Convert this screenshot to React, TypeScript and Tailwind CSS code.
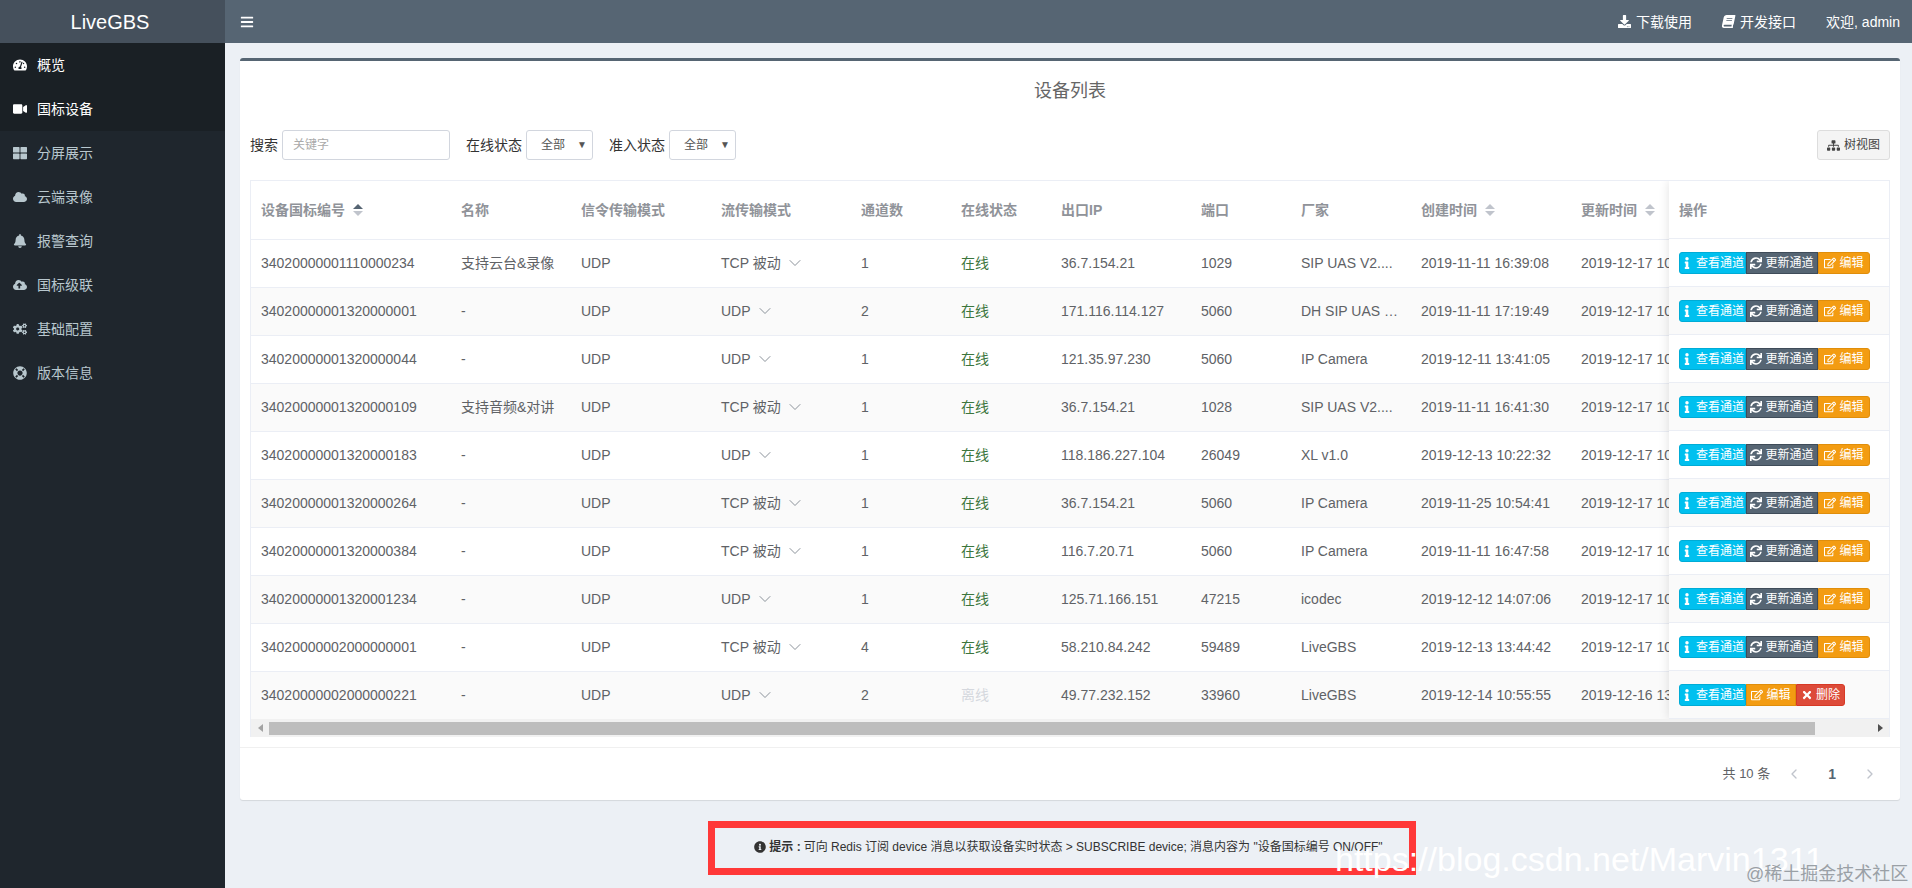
import {
  FaBars,
  FaBell,
  FaBook,
  FaCloud,
  FaCloudUploadAlt,
  FaCogs,
  FaDownload,
  FaInfo,
  FaInfoCircle,
  FaLifeRing,
  FaRegEdit,
  FaSitemap,
  FaSync,
  FaTachometerAlt,
  FaThLarge,
  FaTimes,
  FaVideo,
} from 'react-icons/fa';
import { ChevronDown, ChevronLeft, ChevronRight } from 'lucide-react';

const menu = [
  { icon: FaTachometerAlt, label: '概览', active: true },
  { icon: FaVideo, label: '国标设备', active: true },
  { icon: FaThLarge, label: '分屏展示' },
  { icon: FaCloud, label: '云端录像' },
  { icon: FaBell, label: '报警查询' },
  { icon: FaCloudUploadAlt, label: '国标级联' },
  { icon: FaCogs, label: '基础配置' },
  { icon: FaLifeRing, label: '版本信息' },
];

const devices = [
  ['34020000001110000234', '支持云台&录像', 'TCP 被动', '1', '36.7.154.21', '1029', 'SIP UAS V2....', '2019-11-11 16:39:08', '2019-12-17 10:22:31'],
  ['34020000001320000001', '-', 'UDP', '2', '171.116.114.127', '5060', 'DH SIP UAS V2.1', '2019-11-11 17:19:49', '2019-12-17 10:22:31'],
  ['34020000001320000044', '-', 'UDP', '1', '121.35.97.230', '5060', 'IP Camera', '2019-12-11 13:41:05', '2019-12-17 10:22:31'],
  ['34020000001320000109', '支持音频&对讲', 'TCP 被动', '1', '36.7.154.21', '1028', 'SIP UAS V2....', '2019-11-11 16:41:30', '2019-12-17 10:22:31'],
  ['34020000001320000183', '-', 'UDP', '1', '118.186.227.104', '26049', 'XL v1.0', '2019-12-13 10:22:32', '2019-12-17 10:22:31'],
  ['34020000001320000264', '-', 'TCP 被动', '1', '36.7.154.21', '5060', 'IP Camera', '2019-11-25 10:54:41', '2019-12-17 10:22:31'],
  ['34020000001320000384', '-', 'TCP 被动', '1', '116.7.20.71', '5060', 'IP Camera', '2019-11-11 16:47:58', '2019-12-17 10:22:31'],
  ['34020000001320001234', '-', 'UDP', '1', '125.71.166.151', '47215', 'icodec', '2019-12-12 14:07:06', '2019-12-17 10:22:31'],
  ['34020000002000000001', '-', 'TCP 被动', '4', '58.210.84.242', '59489', 'LiveGBS', '2019-12-13 13:44:42', '2019-12-17 10:22:31'],
  ['34020000002000000221', '-', 'UDP', '2', '49.77.232.152', '33960', 'LiveGBS', '2019-12-14 10:55:55', '2019-12-16 13:22:31'],
];

function SortCaret({ active }: { active?: boolean }) {
  return (
    <svg width="10" height="12" viewBox="0 0 10 12" className="ml-2 inline-block align-[-1px]">
      <path d="M5 0 10 5H0z" fill={active ? '#566573' : '#c0c4cc'} />
      <path d="M5 12 0 7h10z" fill="#c0c4cc" />
    </svg>
  );
}

function Filter({ label }: { label: string }) {
  return (
    <div className="flex items-center">
      <span className="mr-[4px] text-[#333]">{label}</span>
      <div className="flex h-[30px] w-[67px] items-center justify-between rounded-[3px] border border-[#d2d6de] pl-[14px] pr-[5px] text-xs text-[#555]">
        <span>全部</span>
        <span className="text-[10px]">▼</span>
      </div>
    </div>
  );
}

function ActionButton({ color, icon: Icon, label, className }: { color: string; icon: any; label: string; className: string }) {
  return (
    <span className={`flex h-[22px] items-center justify-center gap-[3px] border text-xs text-white ${color} ${className}`}>
      <Icon size={12} />
      {label}
    </span>
  );
}

function Actions({ offline }: { offline: boolean }) {
  return (
    <div className="flex">
      <ActionButton color="border-[#00acd6] bg-[#00c0ef]" icon={FaInfo} label="查看通道" className="w-[67px] rounded-l-[3px]" />
      {offline ? (
        <>
          <ActionButton color="border-[#e08e0b] bg-[#f39c12]" icon={FaRegEdit} label="编辑" className="w-[50px]" />
          <ActionButton color="border-[#d73925] bg-[#dd4b39]" icon={FaTimes} label="删除" className="w-[49px] rounded-r-[3px]" />
        </>
      ) : (
        <>
          <ActionButton color="border-[#3f4c59] bg-[#566573]" icon={FaSync} label="更新通道" className="w-[72px]" />
          <ActionButton color="border-[#e08e0b] bg-[#f39c12]" icon={FaRegEdit} label="编辑" className="w-[52px] rounded-r-[3px]" />
        </>
      )}
    </div>
  );
}

export default function App() {
  const headers = ['名称', '信令传输模式', '流传输模式', '通道数', '在线状态', '出口IP', '端口', '厂家'];

  return (
    <div className="relative flex h-[888px] w-[1912px] overflow-hidden bg-[#ecf0f5] text-sm text-[#606266] [font-family:'Liberation_Sans','Noto_Sans_CJK_SC',sans-serif]">
      {/* Sidebar */}
      <aside className="h-full w-[225px] shrink-0 bg-[#1f262d]">
        <div className="flex h-[43px] items-center justify-center bg-[#45505c] pr-[5px] text-xl text-white">LiveGBS</div>
        {menu.map(({ icon: Icon, label, active }) => (
          <div
            key={label}
            className={`flex h-[44px] items-center gap-[10px] pl-[13px] ${active ? 'bg-[#1a2025] text-white' : 'text-[#b8c7ce]'}`}
          >
            <Icon size={14} />
            <span>{label}</span>
          </div>
        ))}
      </aside>

      <div className="flex min-w-0 flex-1 flex-col">
        {/* Navbar */}
        <header className="flex h-[43px] shrink-0 items-center justify-between bg-[#566573] pl-[15px] pr-[12px] text-white">
          <FaBars size={14} />
          <div className="flex items-center">
            <span className="flex items-center gap-[5px]"><FaDownload size={13} />下载使用</span>
            <span className="ml-[30px] flex items-center gap-[5px]"><FaBook size={13} className="-skew-x-12" />开发接口</span>
            <span className="ml-[30px]">欢迎, admin</span>
          </div>
        </header>

        {/* Card */}
        <main className="ml-[15px] mr-[12px] mt-[15px] h-[742px] rounded-[3px] border-t-[3px] border-[#566573] bg-white shadow-[0_1px_1px_rgba(0,0,0,0.1)]">
          <h2 className="mt-[17px] text-center text-lg leading-[26px] text-[#666]">设备列表</h2>

          <div className="mx-[10px] mt-[26px] flex h-[30px] items-center">
            <span className="mr-[4px] text-[#333]">搜索</span>
            <div className="flex h-[30px] w-[168px] items-center rounded-[3px] border border-[#d2d6de] pl-[10px] text-xs text-[#aaa]">关键字</div>
            <div className="ml-[16px]"><Filter label="在线状态" /></div>
            <div className="ml-[16px]"><Filter label="准入状态" /></div>
            <div className="ml-auto flex h-[30px] w-[73px] items-center justify-center gap-[4px] rounded-[3px] border border-[#ddd] bg-[#f4f4f4] text-xs text-[#444]">
              <FaSitemap size={13} />
              树视图
            </div>
          </div>

          {/* Table */}
          <div className="relative mx-[10px] mt-[20px] h-[557px] overflow-hidden border-x border-t border-[#ebeef5]">
            <table className="w-[1480px] table-fixed border-collapse">
              <colgroup>
                <col className="w-[200px]" />
                <col className="w-[120px]" />
                <col className="w-[140px]" />
                <col className="w-[140px]" />
                <col className="w-[100px]" />
                <col className="w-[100px]" />
                <col className="w-[140px]" />
                <col className="w-[100px]" />
                <col className="w-[120px]" />
                <col className="w-[160px]" />
                <col className="w-[160px]" />
              </colgroup>
              <thead>
                <tr className="h-[58px] border-b border-[#ebeef5] text-left font-bold text-[#909399]">
                  <th className="px-[10px]">设备国标编号<SortCaret active /></th>
                  {headers.map((h) => (
                    <th key={h} className="px-[10px]">{h}</th>
                  ))}
                  <th className="px-[10px]">创建时间<SortCaret /></th>
                  <th className="px-[10px]">更新时间<SortCaret /></th>
                </tr>
              </thead>
              <tbody>
                {devices.map((d, i) => (
                  <tr key={d[0]} className={`h-[48px] border-b border-[#ebeef5] ${i % 2 ? 'bg-[#fafafa]' : 'bg-white'}`}>
                    <td className="px-[10px]">{d[0]}</td>
                    <td className="px-[10px]">{d[1]}</td>
                    <td className="px-[10px]">UDP</td>
                    <td className="px-[10px]">
                      <span className="flex items-center gap-[4px]">
                        {d[2]}
                        <ChevronDown size={20} strokeWidth={1.1} className="text-[#808890]" />
                      </span>
                    </td>
                    <td className="px-[10px]">{d[3]}</td>
                    <td className={`px-[10px] ${i === 9 ? 'text-[#d5d8de]' : 'text-[#3c763d]'}`}>{i === 9 ? '离线' : '在线'}</td>
                    <td className="px-[10px]">{d[4]}</td>
                    <td className="px-[10px]">{d[5]}</td>
                    <td className="truncate px-[10px]">{d[6]}</td>
                    <td className="px-[10px]">{d[7]}</td>
                    <td className="whitespace-nowrap px-[10px]">{d[8]}</td>
                  </tr>
                ))}
              </tbody>
            </table>

            {/* Fixed column */}
            <div className="absolute right-0 top-0 w-[220px] bg-white shadow-[0_0_10px_rgba(0,0,0,0.12)]">
              <div className="flex h-[58px] items-center border-b border-[#ebeef5] px-[10px] font-bold text-[#909399]">操作</div>
              {devices.map((d, i) => (
                <div key={d[0]} className={`flex h-[48px] items-center border-b border-[#ebeef5] px-[10px] ${i % 2 ? 'bg-[#fafafa]' : 'bg-white'}`}>
                  <Actions offline={i === 9} />
                </div>
              ))}
            </div>

            {/* Scrollbar */}
            <div className="absolute bottom-0 left-0 flex h-[18px] w-full items-center bg-[#f1f1f1] pr-[1px]">
              <div className="flex w-[18px] shrink-0 justify-center">
                <span className="h-0 w-0 border-y-[4px] border-r-[5px] border-y-transparent border-r-[#a3a3a3]" />
              </div>
              <div className="h-[13px] w-[1546px] bg-[#bdbdbd]" />
              <div className="flex flex-1 justify-end pr-[5px]">
                <span className="h-0 w-0 border-y-[4px] border-l-[5px] border-y-transparent border-l-[#505050]" />
              </div>
            </div>
          </div>

          {/* Pagination */}
          <div className="mt-[10px] flex h-[53px] items-center justify-end border-t border-[#f0f0f0] pr-[22px] text-[13px] text-[#606266]">
            <span>共 10 条</span>
            <ChevronLeft size={16} className="ml-[16px] text-[#c0c4cc]" />
            <span className="mx-[26px] text-sm font-bold text-[#566573]">1</span>
            <ChevronRight size={16} className="text-[#c0c4cc]" />
          </div>
        </main>

        {/* Hint */}
        <p className="mt-[39px] flex items-center justify-center gap-[3px] text-xs text-[#333]">
          <FaInfoCircle size={12} />
          <b>提示 :</b> 可向 Redis 订阅 device 消息以获取设备实时状态 &gt; SUBSCRIBE device; 消息内容为 "设备国标编号 ON/OFF"
        </p>
      </div>

      {/* Annotation and watermarks drawn over the page */}
      <div className="absolute left-[708px] top-[821px] h-[54px] w-[708px] border-[7px] border-[#ff3838]" />
      <span className="absolute left-[1335px] top-[839px] whitespace-nowrap text-[34px] leading-[40px] text-white">https://blog.csdn.net/Marvin1311</span>
      <span className="absolute left-[1746px] top-[862px] whitespace-nowrap text-lg leading-[24px] text-[#9aa0a6]">@稀土掘金技术社区</span>
    </div>
  );
}
